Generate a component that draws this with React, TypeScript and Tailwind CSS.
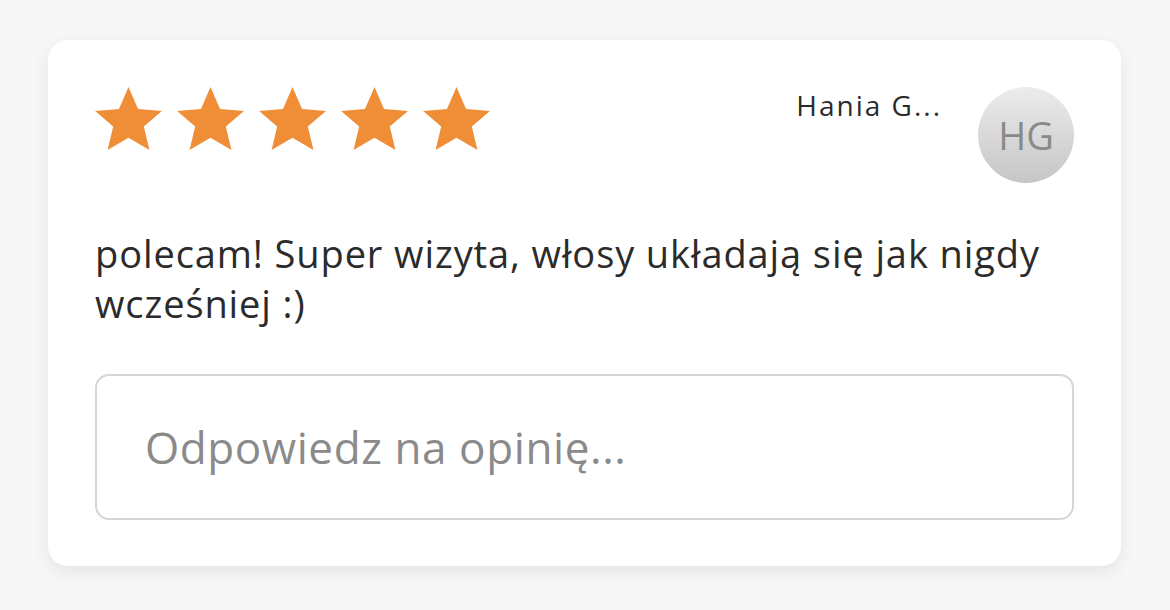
import { useState } from 'react';

function Star() {
  return (
    <svg viewBox="0 0 24 24" className="w-[75px] h-[75px]" fill="#ef8e37">
      <path d="M12 1.6l3.05 7.05 7.65.6-5.8 5 1.8 7.5L12 17.8l-6.7 3.95 1.8-7.5-5.8-5 7.65-.6z" />
    </svg>
  );
}

export default function App() {
  const [reply, setReply] = useState('');

  return (
    <div
      className="w-[1170px] h-[610px] bg-[#f7f7f7] pt-[40px] pl-[48px]"
      style={{ fontFamily: '"Open Sans", "Lato", sans-serif' }}
    >
      <div className="w-[1073px] h-[526px] bg-white rounded-[20px] shadow-[0_6px_18px_rgba(0,0,0,0.08)] px-[47px] pt-[47px]">
        <div className="flex justify-between h-[96px]">
          <div className="flex gap-[7px] -ml-[4px] -mt-[5px]">
            {[0, 1, 2, 3, 4].map((i) => (
              <Star key={i} />
            ))}
          </div>
          <div className="flex items-start gap-[36px]">
            <span className="text-[28px] leading-none tracking-[2px] text-[#2b2b2b] mt-[4px]">Hania G...</span>
            <div className="w-[96px] h-[96px] rounded-full bg-gradient-to-b from-[#ececec] to-[#c6c6c6] flex items-center justify-center">
              <span className="text-[38px] text-[#8a8a8a]">HG</span>
            </div>
          </div>
        </div>

        <p className="mt-[45px] text-[38px] leading-[50px] tracking-[0.9px] text-[#2b2b2b] w-[980px]">
          polecam! Super wizyta, włosy układają się jak nigdy wcześniej :)
        </p>

        <div className="mt-[46px] h-[146px] border-2 border-[#d6d6d6] rounded-[14px] flex items-center px-[48px]">
          <input
            value={reply}
            onChange={(e) => setReply(e.target.value)}
            placeholder="Odpowiedz na opinię..."
            className="w-full text-[44px] tracking-[0.6px] text-[#2b2b2b] placeholder:text-[#8a8a8a] outline-none bg-transparent"
          />
        </div>
      </div>
    </div>
  );
}
